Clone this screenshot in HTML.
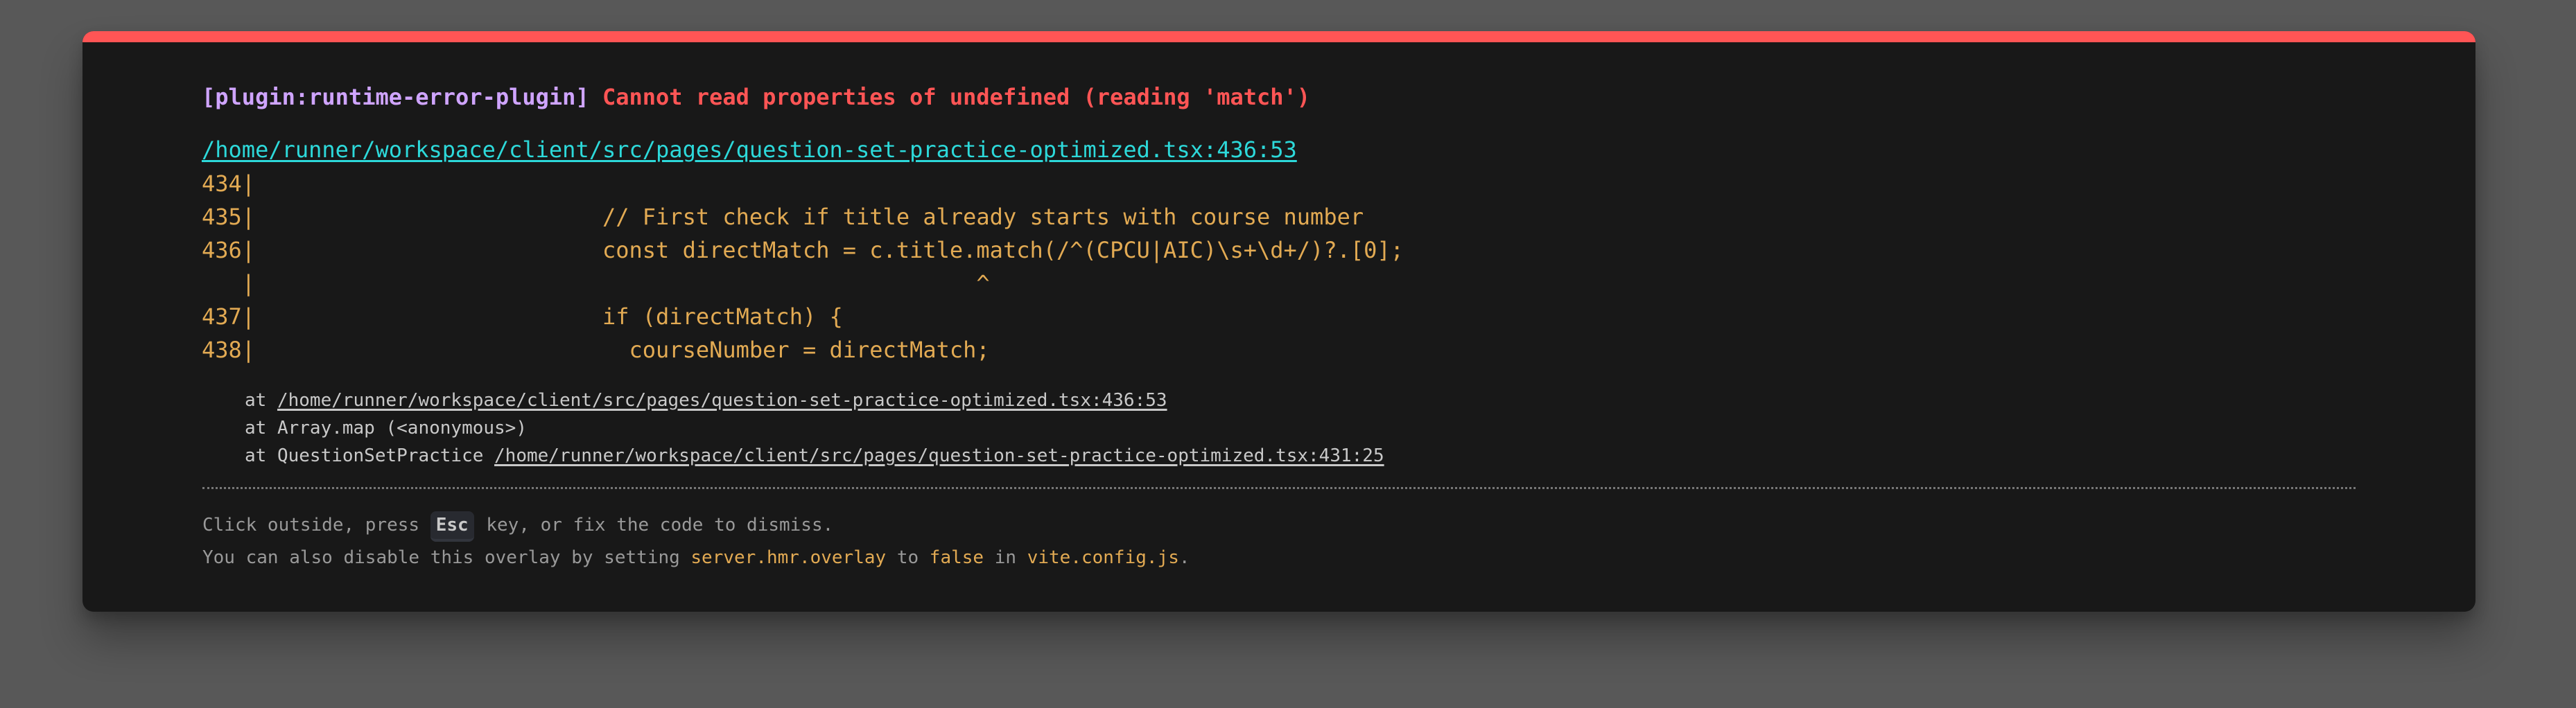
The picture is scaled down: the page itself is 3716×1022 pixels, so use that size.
<!DOCTYPE html>
<html><head><meta charset="utf-8"><style>
html,body{margin:0;padding:0;width:3716px;height:1022px;background:#585858;overflow:hidden}
.panel{position:absolute;left:119px;top:45px;width:3452px;height:838px;background:#181818;border-radius:16px;overflow:hidden;box-shadow:0 40px 60px rgba(0,0,0,.3),0 10px 20px rgba(0,0,0,.2)}
.bar{position:absolute;left:0;top:0;right:0;height:16px;background:#ff5555}
.l{position:absolute;white-space:pre;font-family:"DejaVu Sans Mono","Liberation Mono",monospace;margin:0}
.c{font-size:32px;line-height:48px;color:#e2aa53}
.s{font-size:26px;line-height:40px;color:#c9c9c9}
.f{font-size:26px;line-height:40px;color:#999}
u{text-decoration-thickness:3px;text-underline-offset:4px}
kbd{font-family:inherit;font-weight:bold;color:#c9c9c9;background:#282a30;border-radius:8px;padding:5px 8px;border-bottom:4px solid #32353d;margin-right:2px}
.hr{position:absolute;left:173px;top:658px;width:3106px;border-top:3px dotted #777}
</style></head><body>
<div class="panel">
<div class="bar"></div>
<div class="l c" style="left:172px;top:71px;font-weight:bold"><span style="color:#cfa4ff">[plugin:runtime-error-plugin]</span> <span style="color:#ff5555">Cannot read properties of undefined (reading 'match')</span></div>
<div class="l c" style="left:172px;top:147px;color:#2dd9da"><u>/home/runner/workspace/client/src/pages/question-set-practice-optimized.tsx:436:53</u></div>
<div class="l c" style="left:172px;top:196px">434|
435|                          // First check if title already starts with course number
436|                          const directMatch = c.title.match(/^(CPCU|AIC)\s+\d+/)?.[0];
   |                                                      ^
437|                          if (directMatch) {
438|                            courseNumber = directMatch;</div>
<div class="l s" style="left:234px;top:513px">at <u>/home/runner/workspace/client/src/pages/question-set-practice-optimized.tsx:436:53</u>
at Array.map (&lt;anonymous&gt;)
at QuestionSetPractice <u>/home/runner/workspace/client/src/pages/question-set-practice-optimized.tsx:431:25</u></div>
<div class="hr"></div>
<div class="l f" style="left:173px;top:690px;line-height:47px">Click outside, press <kbd>Esc</kbd> key, or fix the code to dismiss.
You can also disable this overlay by setting <span style="color:#e2aa53">server.hmr.overlay</span> to <span style="color:#e2aa53">false</span> in <span style="color:#e2aa53">vite.config.js</span>.</div>
</div>
</body></html>
